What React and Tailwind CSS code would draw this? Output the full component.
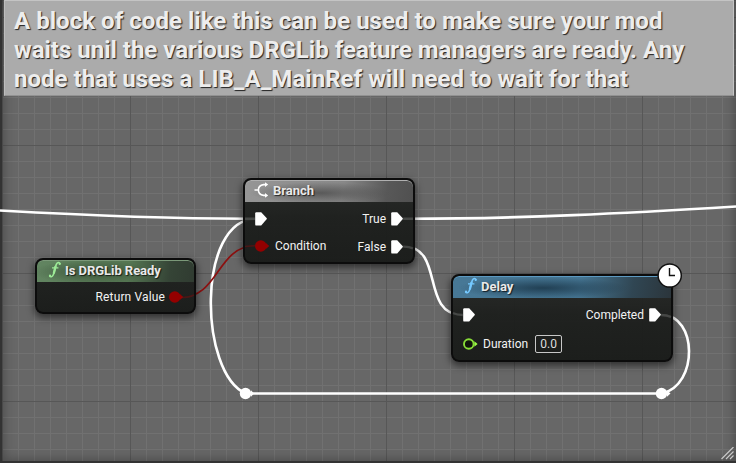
import React from "react";

const titleFont = "font-['Roboto','Liberation_Sans',sans-serif]";

function ExecPin() {
  return (
    <svg width="12" height="14" viewBox="0 0 12 14" className="block shrink-0">
      <path d="M1.4 .2H6.2L11.8 6.3V7.1L6.2 13.6H1.4Q.2 13.6 .2 12.4V1.4Q.2 .2 1.4 .2Z" fill="#fff" />
    </svg>
  );
}

function BoolPin() {
  return (
    <svg width="15" height="12" viewBox="0 0 15 12" className="block shrink-0">
      <circle cx="5.8" cy="6" r="5.8" fill="#940000" />
      <path d="M10.9 3L14.2 6L10.9 9Z" fill="#940000" />
    </svg>
  );
}

function FloatPin() {
  return (
    <svg width="15" height="12" viewBox="0 0 15 12" className="block shrink-0">
      <circle cx="5.8" cy="6" r="4.8" fill="#10150c" stroke="#87dc37" strokeWidth="1.9" />
      <path d="M11.4 3.3L14.6 6L11.4 8.7Z" fill="#9cff45" />
    </svg>
  );
}

function FunctionIcon({ color }) {
  return (
    <svg width="14" height="18" viewBox="0 0 14 18" className="block shrink-0">
      <path
        d="M11.9 2.6C11.3 1 9.3 1.2 8.3 3.4C7.3 5.8 6.5 11 5.3 13.8C4.4 15.9 2.4 16.3 1.7 15.1"
        fill="none"
        stroke={color}
        strokeWidth="1.6"
        strokeLinecap="round"
      />
      <path d="M7.6 5L5.8 12.6" stroke={color} strokeWidth="2.3" />
      <path d="M4 6.9H10.4" stroke={color} strokeWidth="1.3" />
      <circle cx="11.7" cy="2.9" r="1.1" fill={color} />
      <circle cx="2" cy="14.7" r="1.1" fill={color} />
    </svg>
  );
}

function BranchIcon() {
  return (
    <svg width="16" height="16" viewBox="0 0 16 16" className="block shrink-0">
      <path d="M.5 8H4.5M12 2.6H9.5Q4.4 3.4 4.4 8Q4.4 12.6 9.5 13.4H12" fill="none" stroke="#fff" strokeWidth="1.6" />
      <path d="M11 .2L14.2 2.6L11 5ZM11 11L14.2 13.4L11 15.8Z" fill="#fff" />
    </svg>
  );
}

function Node({ className, header, icon, title, titleClass = "", children }) {
  return (
    <section
      className={`absolute flex flex-col overflow-hidden rounded-[8px] border-2 border-[#0c0c0c] bg-[linear-gradient(#272927ee,#1c1e1cf2_45%,#191b19f5)] shadow-[0_3px_7px_1px_rgba(0,0,0,0.5)] ${className}`}
    >
      <header className={`flex h-[22px] shrink-0 items-center rounded-t-[6px] pb-[2px] ${header}`}>
        {icon}
        <h2 className={`text-[13px] leading-none font-bold whitespace-nowrap text-[#e9e9e9] [text-shadow:1px_1px_1px_rgba(0,0,0,0.7)] ${titleClass}`}>{title}</h2>
      </header>
      {children}
    </section>
  );
}

function Label({ children, className = "" }) {
  return <span className={`text-[12px] leading-none whitespace-nowrap text-[#f2f2f2] ${className}`}>{children}</span>;
}

function Grid() {
  return (
    <svg width="736" height="463" className="absolute inset-0">
      <defs>
        <pattern id="minor" x="2" y="1" width="16" height="16" patternUnits="userSpaceOnUse">
          <path d="M0 .5H16M.5 0V16" stroke="#717171" />
        </pattern>
        <pattern id="major" x="2" y="17" width="128" height="128" patternUnits="userSpaceOnUse">
          <path d="M0 .5H128M.5 0V128" stroke="#575757" />
        </pattern>
      </defs>
      <rect width="736" height="463" fill="#676767" />
      <rect width="736" height="463" fill="url(#minor)" />
      <rect width="736" height="463" fill="url(#major)" />
    </svg>
  );
}

function Wires() {
  return (
    <svg width="736" height="463" className="absolute inset-0" fill="none">
      <g stroke="#fff" strokeWidth="2.6">
        <path d="M0 210.5C80 215 160 219 254 218.7" />
        <path d="M404 218.8C520 219 630 213 736 206.5" />
        <path d="M404 246.5C445 247 420 314 462 315" />
        <path d="M662 315C697 315 699 385 662 393.5" />
        <path d="M662 393.5H246" />
        <path d="M246 393.5C199 374 196 219 256 218.7" />
      </g>
      <path d="M180 297.5C220 297.5 216 246 256 245.5" stroke="#8c1010" strokeWidth="1.7" />
      <g fill="#fff">
        <circle cx="245.5" cy="393.5" r="5.7" />
        <path d="M251 390.3L254 393.5L251 396.7Z" />
        <circle cx="661.5" cy="393.5" r="5.7" />
        <path d="M667 390.3L670.5 393.5L667 396.7Z" />
      </g>
    </svg>
  );
}

function WireEnds() {
  return (
    <svg width="736" height="463" className="pointer-events-none absolute inset-0" fill="none">
      <g stroke="#fff" strokeOpacity=".14" strokeWidth="2.4">
        <path d="M245 218.7H255M403 218.7H413M403 246.6Q409 246.5 413 248.5M453 313Q457 315 463 315M661 315Q667 315 671 317" />
      </g>
      <path d="M245 246.5L255 245.6M181 297.5Q189 297.5 194 295" stroke="#8c1010" strokeOpacity=".4" strokeWidth="1.7" />
    </svg>
  );
}

export default function App() {
  return (
    <main className={`relative h-[463px] w-[736px] overflow-hidden bg-[#666] ${titleFont}`}>
      <Grid />
      <div className="absolute inset-0 border-b-2 border-l-2 border-[#333] shadow-[inset_0_0_12px_1px_rgba(0,0,0,0.3)]" />
      <h1 className="relative ml-1 h-24 w-[730px] border border-t-[#c4c4c4] border-r-[#c4c4c4] border-b-[#929292] border-l-[#bdbdbd] bg-[#ababab] pt-[6px] pl-[9px] text-[24px] leading-[29px] font-bold text-[#ededed] [text-shadow:1px_1px_1px_#222]">
        <span className="block tracking-[0.035px] whitespace-nowrap">A block of code like this can be used to make sure your mod</span>
        <span className="block whitespace-nowrap">waits unil the various DRGLib feature managers are ready. Any</span>
        <span className="block tracking-[0.035px] whitespace-nowrap">node that uses a LIB_A_MainRef will need to wait for that</span>
      </h1>
      <Wires />

      <Node
        className="top-[258px] left-[35px] h-[56px] w-[161px]"
        header="gap-[3px] pl-[11px] bg-[radial-gradient(ellipse_60px_12px_at_55px_12px,#2d422daa,transparent),linear-gradient(100deg,#628561_0%,#557652_58%,#354436_84%,#303b31_100%)] shadow-[inset_0_1px_0_#7b9979]"
        icon={<FunctionIcon color="#9dea97" />}
        title="Is DRGLib Ready"
        titleClass="tracking-[-0.05px]"
      >
        <div className="flex h-[33px] items-center justify-end gap-[4px] pr-[10px]">
          <Label className="tracking-[0.14px]">Return Value</Label>
          <BoolPin />
        </div>
      </Node>

      <Node
        className="top-[178px] left-[243px] h-[86px] w-[172px]"
        header="gap-[3px] pl-[9px] bg-[radial-gradient(ellipse_70px_11px_at_75px_13px,#404040aa,transparent),linear-gradient(100deg,#969696_0%,#888_58%,#585858_84%,#505050_100%)] shadow-[inset_0_1px_0_#b0b0b0]"
        icon={<BranchIcon />}
        title="Branch"
      >
        <div className="flex h-[33px] items-center justify-between pr-[10px] pl-[10px]">
          <ExecPin />
          <div className="flex items-center gap-[5px]">
            <Label>True</Label>
            <ExecPin />
          </div>
        </div>
        <div className="flex h-[22px] items-center justify-between pr-[10px] pl-[10px]">
          <div className="flex items-center gap-[5px]">
            <BoolPin />
            <Label>Condition</Label>
          </div>
          <div className="relative top-px flex items-center gap-[5px]">
            <Label>False</Label>
            <ExecPin />
          </div>
        </div>
      </Node>

      <Node
        className="top-[274px] left-[451px] h-[88px] w-[222px]"
        header="gap-[3px] pl-[11px] bg-[radial-gradient(ellipse_85px_11px_at_90px_12px,#183244cc,transparent),linear-gradient(100deg,#477896_0%,#457592_58%,#304653_82%,#2b353b_100%)] shadow-[inset_0_1px_0_#5d9ac2]"
        icon={<FunctionIcon color="#75c9ff" />}
        title="Delay"
      >
        <div className="flex h-[34px] items-center justify-between pr-[10px] pl-[10px]">
          <ExecPin />
          <div className="flex items-center gap-[5px]">
            <Label>Completed</Label>
            <ExecPin />
          </div>
        </div>
        <div className="flex h-[24px] items-center pl-[10px]">
          <FloatPin />
          <Label className="ml-[5px]">Duration</Label>
          <span className="ml-[7px] flex h-[18px] w-[27px] items-center justify-center rounded-[2px] border border-[#c8c8c8] text-[12px] leading-none text-[#ddd]">0.0</span>
        </div>
      </Node>
      <WireEnds />

      <svg width="26" height="26" viewBox="0 0 26 26" className="absolute top-[263px] left-[657px]">
        <circle cx="12.7" cy="12.5" r="11.6" fill="#fff" stroke="#111" strokeWidth="1.5" />
        <path d="M12.5 5V12.5H18" fill="none" stroke="#111" strokeWidth="1.4" />
      </svg>
      <svg width="14" height="13" viewBox="0 0 14 13" className="absolute top-[447px] left-[721px]">
        <path d="M.5 12L12.5 0M5 12L12.5 4.5M9 12L12.5 8.5" stroke="#c8c8c8" strokeWidth="1.2" />
      </svg>
    </main>
  );
}
